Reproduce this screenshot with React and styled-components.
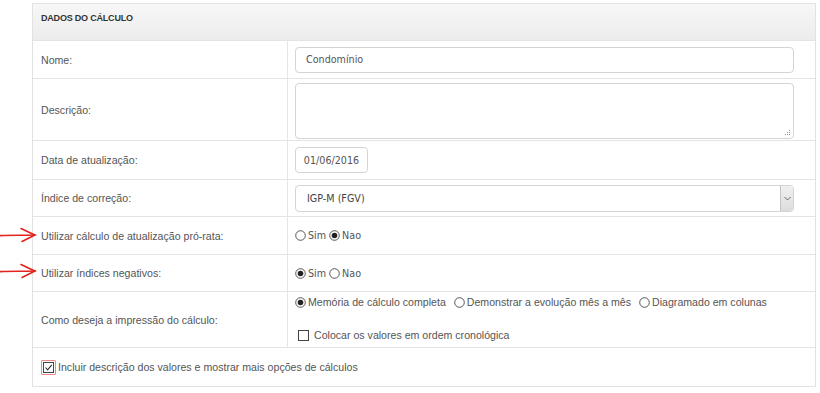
import styled, { createGlobalStyle } from 'styled-components';

const GlobalStyle = createGlobalStyle`
  body {
    margin: 0;
    background: #fff;
    font-family: "Liberation Sans", Arial, sans-serif;
  }
`;

function Radio({ checked }) {
  return (
    <RadioDot viewBox="0 0 11 11">
      <circle cx="5.5" cy="5.5" r="4.8" fill="#fff" stroke="#444" strokeWidth="0.9" />
      {checked && <circle cx="5.5" cy="5.5" r="2.8" fill="#222" />}
    </RadioDot>
  );
}

function Check({ checked }) {
  return (
    <CheckBox viewBox="0 0 11 11">
      <rect x="0.5" y="0.5" width="10" height="10" fill="#fff" stroke="#444" strokeWidth="1" />
      {checked && <path d="M2.5 5.5 L4.6 7.8 L8.8 2.8" fill="none" stroke="#333" strokeWidth="1.1" />}
    </CheckBox>
  );
}

function Arrow({ top }) {
  return (
    <ArrowMark style={{ top }} viewBox="0 0 40 16">
      <path d="M0 8.6 C 10 8, 22 8.4, 35 8" fill="none" stroke="#e3231c" strokeWidth="1.6" strokeLinecap="round" />
      <path d="M21 1.5 C 27 4.5, 31 6, 35 8 C 31 10, 27 12, 22 14.5" fill="none" stroke="#e3231c" strokeWidth="1.6" strokeLinecap="round" />
    </ArrowMark>
  );
}

function App() {
  return (
    <>
      <GlobalStyle />
      <Page>
        <Arrow top={227} />
        <Arrow top={263} />
        <Panel>
          <Header>DADOS DO CÁLCULO</Header>
          <Row $h={38}>
            <Label>Nome:</Label>
            <Field><Input value="Condomínio" readOnly /></Field>
          </Row>
          <Row $h={62}>
            <Label>Descrição:</Label>
            <Field>
              <AreaWrap>
                <TextArea readOnly />
                <Grip viewBox="0 0 7 7">
                  <rect x="5" y="1" width="1" height="1" fill="#999" />
                  <rect x="3" y="3" width="1" height="1" fill="#999" />
                  <rect x="5" y="3" width="1" height="1" fill="#999" />
                  <rect x="1" y="5" width="1" height="1" fill="#999" />
                  <rect x="3" y="5" width="1" height="1" fill="#999" />
                  <rect x="5" y="5" width="1" height="1" fill="#999" />
                </Grip>
              </AreaWrap>
            </Field>
          </Row>
          <Row $h={39}>
            <Label>Data de atualização:</Label>
            <Field><DateInput value="01/06/2016" readOnly /></Field>
          </Row>
          <Row $h={37}>
            <Label>Índice de correção:</Label>
            <Field>
              <Select>
                <span>IGP-M (FGV)</span>
                <SelectButton>
                  <svg width="7" height="5" viewBox="0 0 7 5">
                    <path d="M0.5 1 L3.5 4 L6.5 1" fill="none" stroke="#666" strokeWidth="1" />
                  </svg>
                </SelectButton>
              </Select>
            </Field>
          </Row>
          <Row $h={38}>
            <Label>Utilizar cálculo de atualização pró-rata:</Label>
            <Field>
              <Options>
                <Option><Radio /> Sim</Option>
                <Option><Radio checked /> Nao</Option>
              </Options>
            </Field>
          </Row>
          <Row $h={37}>
            <Label>Utilizar índices negativos:</Label>
            <Field>
              <Options>
                <Option><Radio checked /> Sim</Option>
                <Option><Radio /> Nao</Option>
              </Options>
            </Field>
          </Row>
          <Row $h={56}>
            <Label>Como deseja a impressão do cálculo:</Label>
            <Stack>
              <Options $gap={8}>
                <Option $wide><Radio checked /> Memória de cálculo completa</Option>
                <Option $wide><Radio /> Demonstrar a evolução mês a mês</Option>
                <Option $wide><Radio /> Diagramado em colunas</Option>
              </Options>
              <Option $wide $indent><Check /> Colocar os valores em ordem cronológica</Option>
            </Stack>
          </Row>
          <FullRow>
            <FocusBox><Check checked /></FocusBox>
            <span>Incluir descrição dos valores e mostrar mais opções de cálculos</span>
          </FullRow>
        </Panel>
      </Page>
    </>
  );
}

const Page = styled.div`
  position: relative;
  padding: 3px 4px 0 32px;
  width: 820px;
  box-sizing: border-box;
`;

const ArrowMark = styled.svg`
  position: absolute;
  left: 0;
  width: 40px;
  height: 16px;
`;

const Panel = styled.div`
  width: 784px;
  border: 1px solid #e2e2e2;
  box-sizing: border-box;
  background: #fff;
`;

const Header = styled.div`
  height: 36px;
  display: flex;
  align-items: center;
  padding: 0 0 8px 8px;
  box-sizing: border-box;
  background: linear-gradient(#f7f7f7, #ececec);
  font-size: 9px;
  font-weight: bold;
  color: #333;
  letter-spacing: -0.2px;
`;

const Row = styled.div`
  display: grid;
  grid-template-columns: 255px 1fr;
  height: ${p => p.$h}px;
  border-top: 1px solid #e4e4e4;
  box-sizing: border-box;
`;

const Label = styled.div`
  display: flex;
  align-items: center;
  padding-left: 8px;
  border-right: 1px solid #e4e4e4;
  font-size: 10.6px;
  color: #555;
`;

const Field = styled.div`
  display: flex;
  align-items: center;
  padding: 0 21px 0 7px;
`;

const Stack = styled.div`
  display: flex;
  flex-direction: column;
  justify-content: space-between;
  padding: 4px 0 6px 7px;
`;

const Input = styled.input`
  width: 100%;
  height: 26px;
  box-sizing: border-box;
  border: 1px solid #d4d4d4;
  border-radius: 4px;
  padding: 0 10px;
  font-family: "DejaVu Sans", Verdana, sans-serif;
  font-size: 9.6px;
  color: #555;
  outline: none;
`;

const DateInput = styled(Input)`
  width: 73px;
  text-align: center;
  padding: 0 4px;
`;

const AreaWrap = styled.div`
  position: relative;
  width: 100%;
  height: 56px;
  margin-top: 2px;
`;

const TextArea = styled.textarea`
  display: block;
  width: 100%;
  height: 100%;
  box-sizing: border-box;
  border: 1px solid #d4d4d4;
  border-radius: 4px;
  resize: none;
  outline: none;
`;

const Grip = styled.svg`
  position: absolute;
  right: 3px;
  bottom: 3px;
  width: 7px;
  height: 7px;
`;

const Select = styled.div`
  width: 100%;
  height: 27px;
  box-sizing: border-box;
  border: 1px solid #d4d4d4;
  border-radius: 4px;
  display: flex;
  align-items: center;
  justify-content: space-between;
  padding-left: 11px;
  font-family: "DejaVu Sans", Verdana, sans-serif;
  font-size: 9.6px;
  color: #444;
  overflow: hidden;
`;

const SelectButton = styled.div`
  width: 12px;
  height: 100%;
  display: flex;
  align-items: center;
  justify-content: center;
  background: linear-gradient(#f0f0f0, #dcdcdc);
  border-left: 1px solid #c4c4c4;
`;

const Options = styled.div`
  display: flex;
  align-items: center;
  gap: ${p => p.$gap || 3}px;
`;

const Option = styled.label`
  display: inline-flex;
  align-items: center;
  font-family: ${p => p.$wide ? '"Liberation Sans", Arial' : '"DejaVu Sans", Verdana'}, sans-serif;
  font-size: ${p => p.$wide ? 10.6 : 9.6}px;
  color: #555;
  padding-left: ${p => p.$indent ? 3 : 0}px;
  gap: ${p => p.$indent ? 5 : 2}px;
`;

const RadioDot = styled.svg`
  width: 11px;
  height: 11px;
`;

const CheckBox = styled.svg`
  width: 11px;
  height: 11px;
`;

const FullRow = styled.div`
  height: 38px;
  display: flex;
  align-items: center;
  gap: 2px;
  padding-left: 8px;
  border-top: 1px solid #e4e4e4;
  font-size: 10.6px;
  color: #555;
`;

const FocusBox = styled.span`
  display: inline-flex;
  padding: 1px;
  border: 1px solid #e88;
  border-radius: 1px;
`;

export default App;
